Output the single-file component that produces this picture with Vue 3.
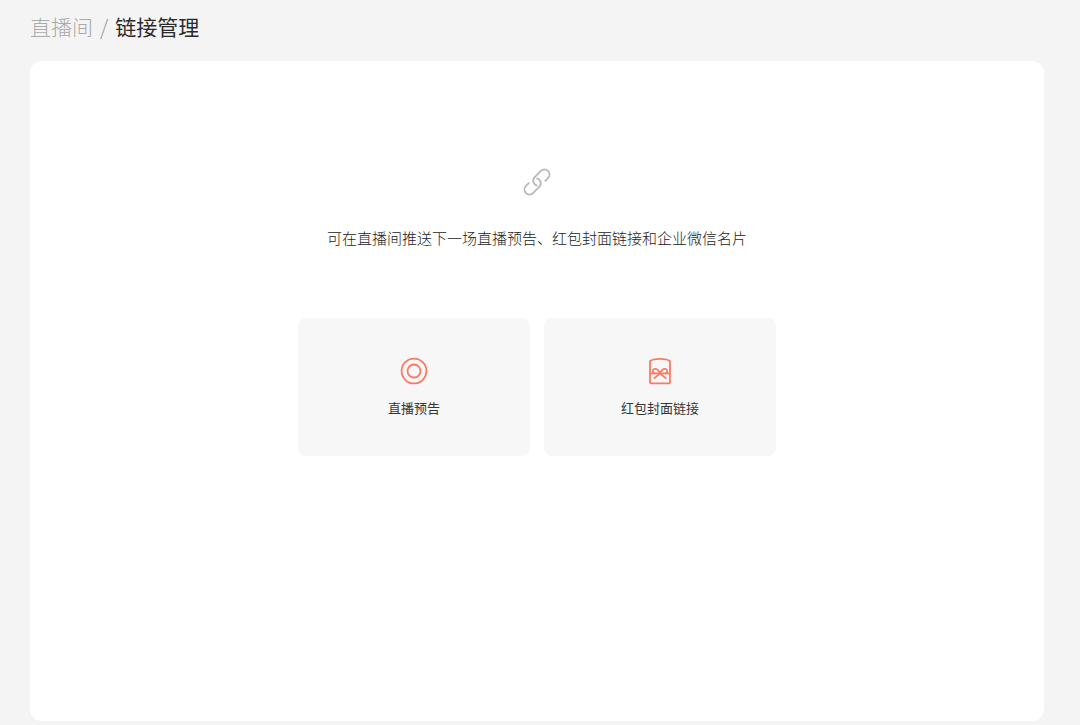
<script setup>
const entries = [
  { id: 'preview', label: '直播预告' },
  { id: 'cover', label: '红包封面链接' },
]
</script>

<template>
  <div class="page">
    <nav class="crumbs" aria-label="面包屑">
      <a class="parent" href="#">直播间</a>
      <span class="slash">/</span>
      <h1 class="current">链接管理</h1>
    </nav>

    <main class="panel">
      <svg class="link-icon" viewBox="0 0 28 28" aria-hidden="true">
        <g transform="rotate(-45 14 14)">
          <path d="M20 19H24.600a5 5 0 0 0 0-10H15.800a5 5 0 0 0-4 8" />
          <path d="M8 9H3.400a5 5 0 0 0 0 10H12.200a5 5 0 0 0 4-8" />
        </g>
      </svg>
      <p class="intro">可在直播间推送下一场直播预告、红包封面链接和企业微信名片</p>

      <div class="entries">
        <button v-for="entry in entries" :key="entry.id" class="entry" type="button">
          <svg class="entry-icon" viewBox="0 0 28 28" aria-hidden="true">
            <template v-if="entry.id === 'preview'">
              <circle cx="14" cy="14" r="12.4" />
              <circle cx="14" cy="14" r="6.5" />
            </template>
            <template v-else>
              <path d="M4 4.200C7.200 1 20.800 1 24 4.200V25.600a.8.8 0 0 1-.8.8H4.800a.8.8 0 0 1-.8-.8z" />
              <path d="M4 16.400h20" />
              <path d="M14 16.400C12.500 13 10.300 11.400 8.200 12C6.100 12.800 6.300 16.200 8.800 16.400M14 16.400C15.500 13 17.700 11.400 19.800 12C21.900 12.800 21.700 16.200 19.200 16.400" />
              <path d="M14 16.400L7.800 21.600M14 16.400l6.200 5.200" />
            </template>
          </svg>
          <span class="entry-label">{{ entry.label }}</span>
        </button>
      </div>
    </main>
  </div>
</template>

<style>
body {
  background: #f4f4f4;
}
</style>

<style scoped>
.page {
  box-sizing: border-box;
  display: flex;
  flex-direction: column;
  min-height: 100vh;
  padding: 10px 36px 4px 30px;
  background: #f4f4f4;
  color: #222;
  font-family: "Noto Sans CJK SC", sans-serif;
  font-weight: 300;
}

.crumbs {
  display: flex;
  align-items: center;
  gap: 7px;
  margin-bottom: 19px;
  font-size: 21px;
  line-height: 32px;
}

.parent {
  color: #aaa;
  text-decoration: none;
}

.slash {
  color: #999;
}

.current {
  margin: 0;
  color: #2a2a2a;
  font-size: 21px;
  font-weight: 400;
}

.panel {
  box-sizing: border-box;
  display: flex;
  flex: 1;
  flex-direction: column;
  align-items: center;
  padding: 107px 24px 24px;
  border-radius: 12px;
  background: #fff;
}

.link-icon {
  width: 28px;
  height: 28px;
  fill: none;
  stroke: #b8b8b8;
  stroke-width: 1.8;
}

.intro {
  margin: 30px 0 68px;
  font-size: 15px;
  line-height: 24px;
}

.entries {
  display: flex;
  flex-wrap: wrap;
  justify-content: center;
  gap: 14px;
}

.entry {
  display: flex;
  flex-direction: column;
  align-items: center;
  width: 232px;
  padding: 39px 16px 38px;
  border: 0;
  border-radius: 8px;
  background: #f7f7f7;
  color: #353535;
  font: inherit;
  cursor: pointer;
}

.entry-icon {
  width: 28px;
  height: 28px;
  fill: none;
  stroke: #fa7a64;
  stroke-width: 1.8;
  stroke-linejoin: round;
}

.entry-label {
  margin-top: 13px;
  font-size: 13px;
  font-weight: 400;
  line-height: 20px;
}
</style>
